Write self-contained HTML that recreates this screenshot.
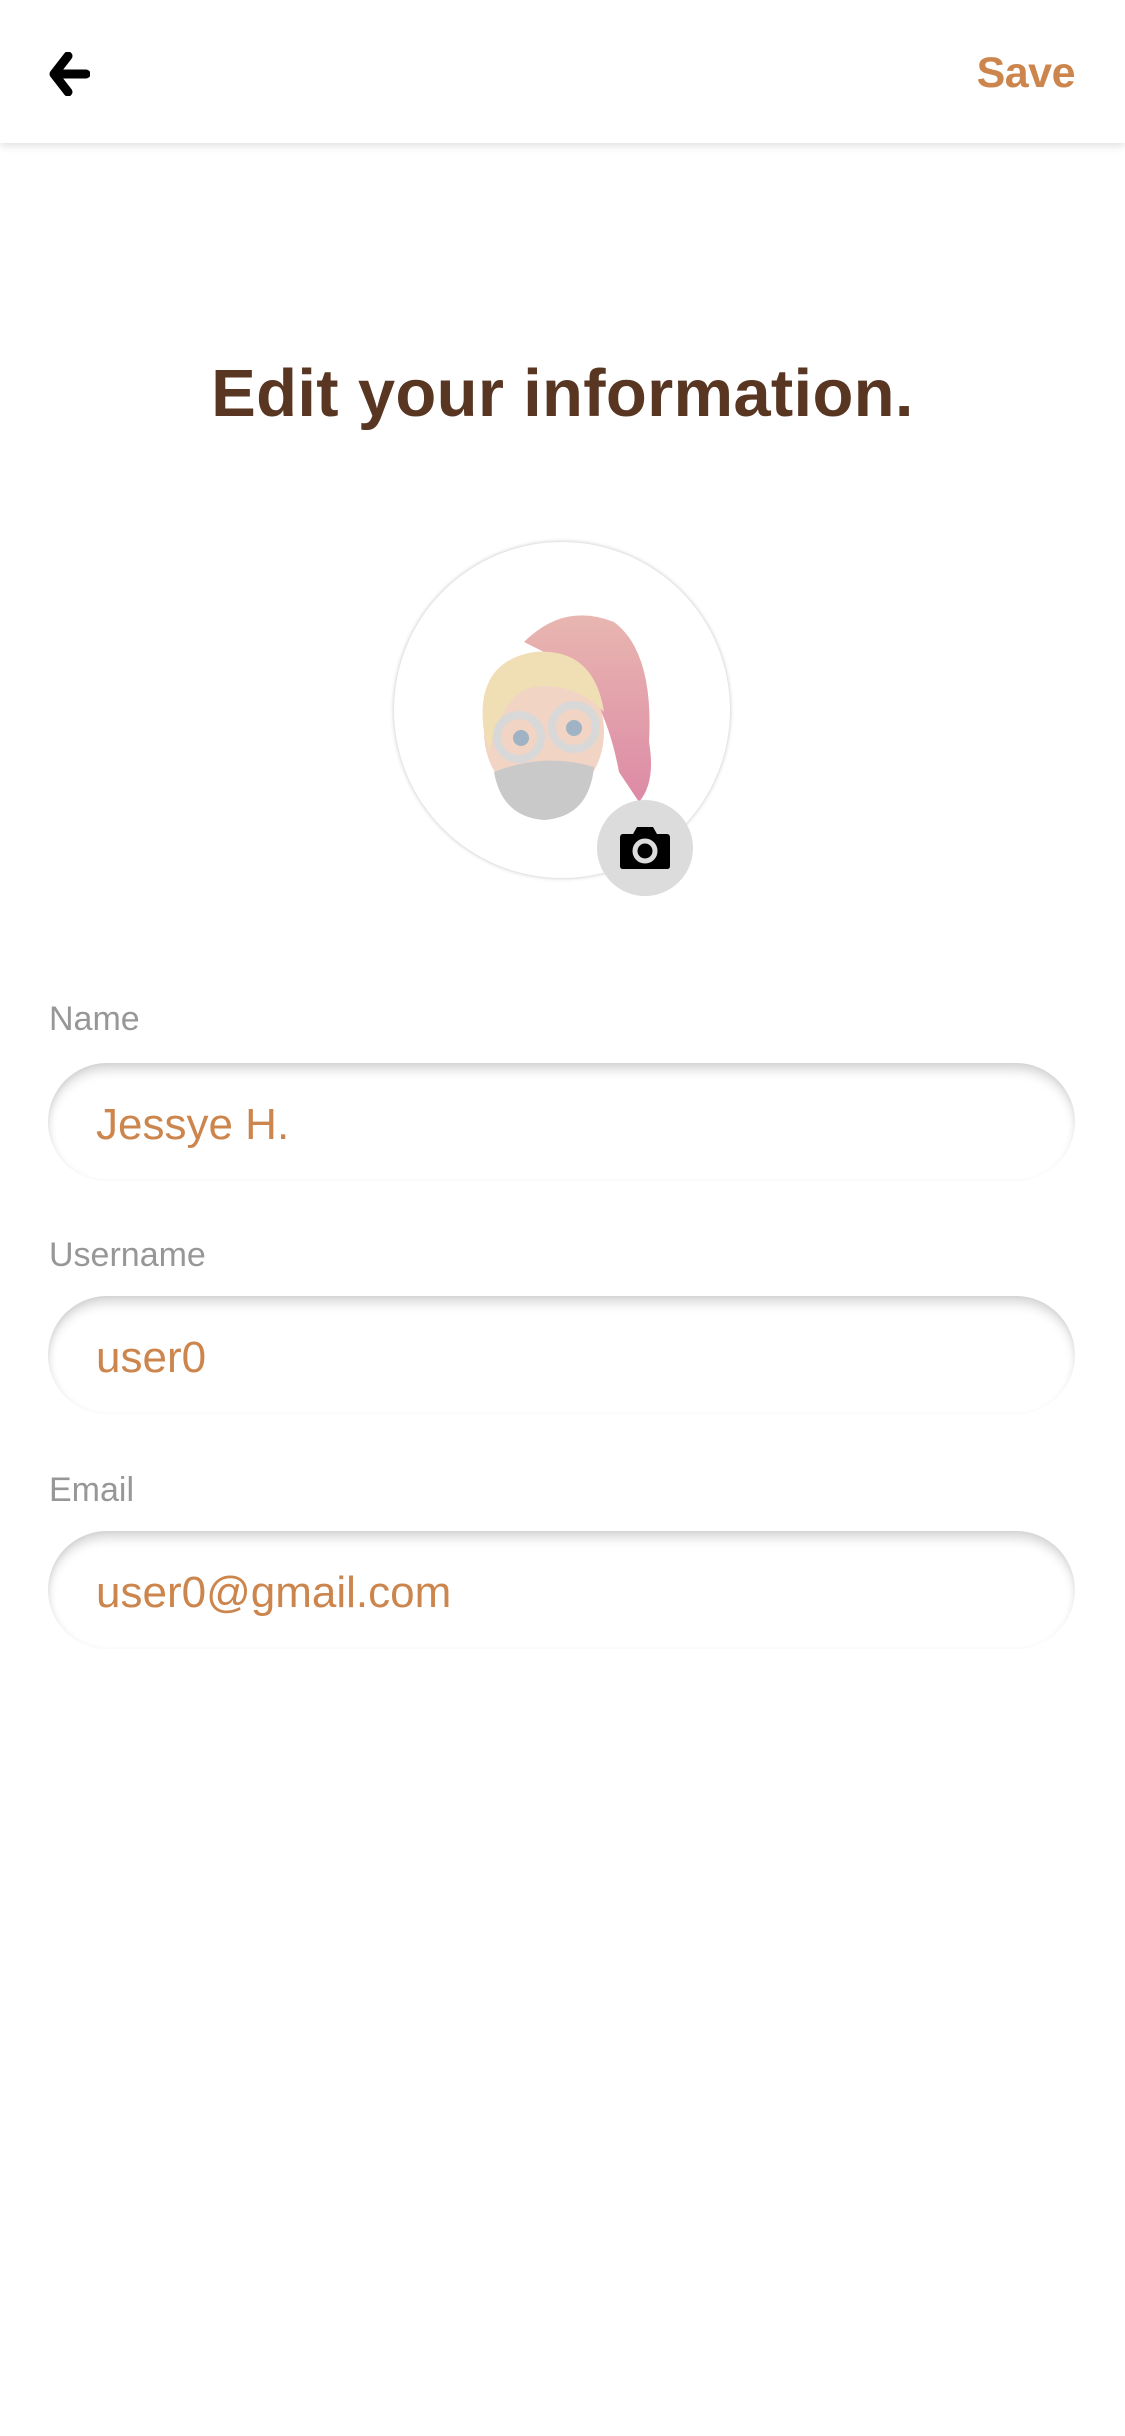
<!DOCTYPE html>
<html><head><meta charset="utf-8"><style>
*{margin:0;padding:0;box-sizing:border-box}
body{width:1125px;height:2436px;background:#fff;font-family:"Liberation Sans",sans-serif;position:relative;overflow:hidden}
.hdr{position:absolute;left:0;top:0;width:1125px;height:143px;background:#fff;box-shadow:0 3px 8px rgba(0,0,0,0.12)}
.save{position:absolute;right:50px;top:49px;font-size:43px;font-weight:bold;color:#cc864d;letter-spacing:-0.5px}
.title{position:absolute;left:0;width:1125px;top:355px;text-align:center;font-size:67px;font-weight:bold;color:#583622;letter-spacing:0.3px}
.av{position:absolute;left:394px;top:542px;width:336px;height:336px;border-radius:50%;background:#fff;box-shadow:0 0 4px rgba(0,0,0,0.25)}
.cam{position:absolute;left:597px;top:800px;width:96px;height:96px;border-radius:50%;background:#dcdcdc}
.lbl{position:absolute;left:49px;font-size:34px;color:#979797}
.inp{position:absolute;left:48px;width:1027px;height:118px;border-radius:59px;background:#fff;box-shadow:inset 0 10px 12px -4px rgba(0,0,0,0.18),inset 4px 0 8px -4px rgba(0,0,0,0.1),inset -4px 0 8px -4px rgba(0,0,0,0.06)}
.inp span{position:absolute;left:48px;top:37px;font-size:44px;color:#cc864d}
</style></head><body>
<div class="hdr">
<svg style="position:absolute;left:48px;top:52px" width="42" height="44" viewBox="0 0 42 44"><path d="M20 4 L6 22 L20 40 M8 22 H38" fill="none" stroke="#000" stroke-width="9" stroke-linecap="round" stroke-linejoin="round"/></svg>
<div class="save">Save</div>
</div>
<div class="title">Edit your information.</div>
<div class="av">
<svg width="336" height="336" viewBox="0 0 336 336">
<defs><linearGradient id="h" x1="0" y1="0" x2="0" y2="1"><stop offset="0" stop-color="#e8b6b0"/><stop offset="1" stop-color="#dd8aa6"/></linearGradient></defs>
<path d="M130 100 Q170 60 220 80 Q260 110 255 200 Q262 240 245 260 L225 230 Q210 150 170 120 Z" fill="url(#h)"/>
<ellipse cx="150" cy="190" rx="60" ry="70" fill="#f1d4c4"/>
<path d="M90 190 Q80 120 140 110 Q200 105 210 170 Q180 140 140 145 Q110 150 95 210 Z" fill="#f0deb5"/>
<path d="M100 230 Q150 210 200 225 Q195 275 150 278 Q108 275 100 230 Z" fill="#c9c9c9"/>
<circle cx="125" cy="195" r="22" fill="none" stroke="#d8d8d8" stroke-width="8"/>
<circle cx="180" cy="185" r="22" fill="none" stroke="#d8d8d8" stroke-width="8"/>
<circle cx="127" cy="196" r="8" fill="#9fb3c4"/><circle cx="180" cy="186" r="8" fill="#9fb3c4"/>
</svg>
</div>
<div class="cam">
<svg style="position:absolute;left:22px;top:24px" width="52" height="46" viewBox="0 0 52 46"><path d="M4 10 H14 L18 3 H34 L38 10 H48 Q51 10 51 14 V42 Q51 45 48 45 H4 Q1 45 1 42 V14 Q1 10 4 10 Z" fill="#000"/><circle cx="26" cy="27" r="10" fill="none" stroke="#dcdcdc" stroke-width="5"/></svg>
</div>
<div class="lbl" style="top:1000px">Name</div>
<div class="inp" style="top:1063px"><span>Jessye H.</span></div>
<div class="lbl" style="top:1236px">Username</div>
<div class="inp" style="top:1296px"><span>user0</span></div>
<div class="lbl" style="top:1471px">Email</div>
<div class="inp" style="top:1531px"><span>user0@gmail.com</span></div>
</body></html>
